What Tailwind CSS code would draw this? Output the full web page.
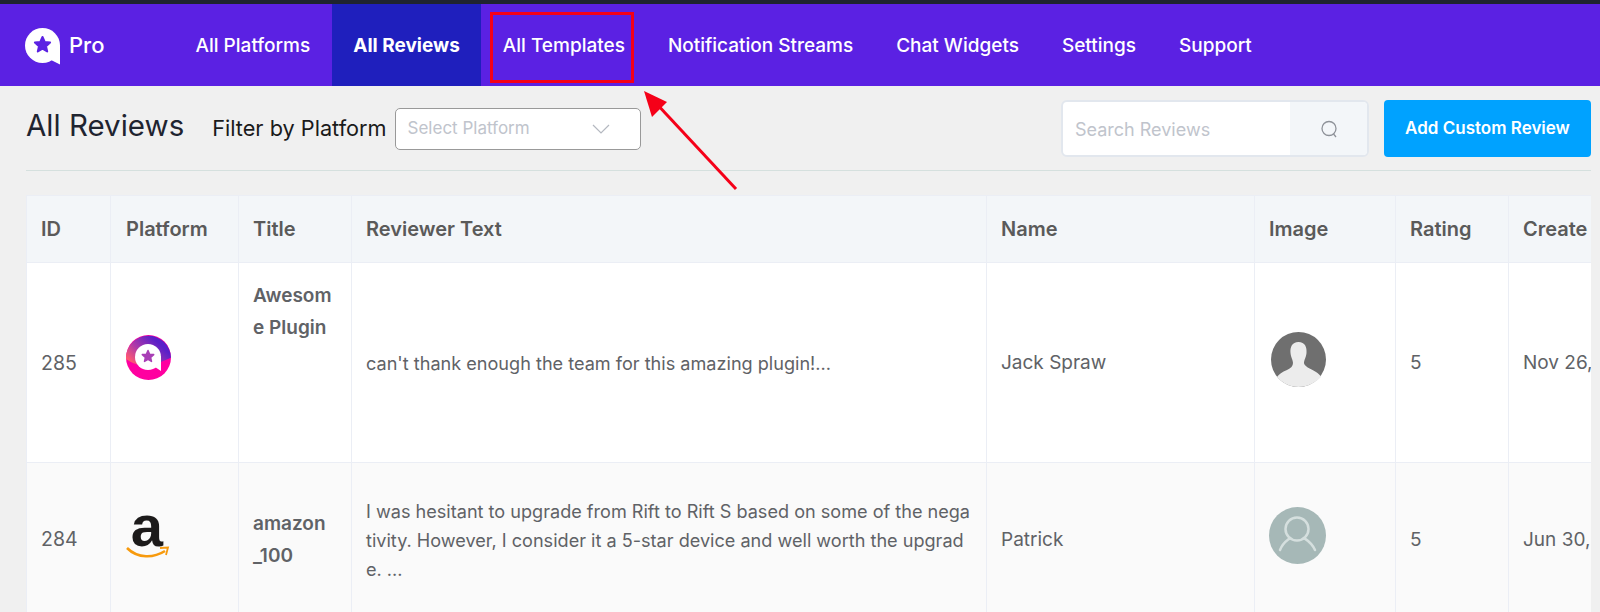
<!DOCTYPE html>
<html lang="en">

<head>
    <meta charset="UTF-8" />
    <title>All Reviews</title>
    <script src="https://cdn.jsdelivr.net/npm/@tailwindcss/browser@4"></script>
</head>

<body class="relative h-[612px] w-[1600px] overflow-hidden bg-[#f0f0f0] font-['Inter',sans-serif] text-[18px] text-[#606266]">
    <!-- Top strip -->
    <div class="h-1 bg-[#1f2430]"></div>

    <!-- Nav -->
    <nav class="flex h-[82px] items-stretch bg-[#5b21e3] text-[19px] font-medium text-white">
        <div class="flex w-[174px] items-center gap-2 pl-[25px]">
            <svg class="mt-[2px]" width="36" height="37" viewBox="0 0 36 37">
                <circle cx="17.5" cy="17.5" r="17.5" fill="#fff" />
                <path d="M35 17 V36.5 L26 32 Z" fill="#fff" />
                <polygon transform="translate(17.5 17)" fill="#5b21e3" stroke="#5b21e3" stroke-width="2" stroke-linejoin="round"
                    points="0,-8 2.2,-3 7.6,-2.5 3.5,1.2 4.7,6.5 0,3.7 -4.7,6.5 -3.5,1.2 -7.6,-2.5 -2.2,-3" />
            </svg>
            <span class="pt-[1px] text-[22px]">Pro</span>
        </div>
        <a class="flex items-center px-[21.5px] pt-[3px]">All Platforms</a>
        <a class="flex items-center bg-[#1f1fbd] px-[21.5px] pt-[3px] font-bold">All Reviews</a>
        <a class="relative flex items-center px-[21.5px] pt-[3px]">
            All Templates
            <span class="absolute top-[8px] bottom-[3px] left-[9px] right-[12px] border-[3px] border-[#f50018]"></span>
        </a>
        <a class="flex items-center px-[21.5px] pt-[3px]">Notification Streams</a>
        <a class="flex items-center px-[21.5px] pt-[3px]">Chat Widgets</a>
        <a class="flex items-center px-[21.5px] pt-[3px]">Settings</a>
        <a class="flex items-center px-[21.5px] pt-[3px]">Support</a>
    </nav>

    <main class="pl-[26px] pr-[9px]">
        <!-- Toolbar -->
        <div class="flex h-[85px] items-center justify-between border-b border-[#d5e0de] pt-[1px]">
            <div class="flex items-center">
                <h1 class="mb-[5px] mr-[28px] text-[29.5px] leading-none text-[#1f2430]">All Reviews</h1>
                <span class="mb-[1px] mr-[8px] text-[21.7px] text-[#1a1a1a]">Filter by Platform</span>
                <div class="flex h-[42px] w-[246px] items-center justify-between rounded-[5px] border border-[#999] bg-white pl-3 pr-[30px] pt-[1px] text-[17px] text-[#c0c4cc]">
                    Select Platform
                    <svg width="18" height="10" viewBox="0 0 18 10" fill="none" stroke="#b4b8c0" stroke-width="1.2">
                        <path d="M1 1 L9 9 L17 1" />
                    </svg>
                </div>
            </div>
            <div class="flex items-center gap-[15px]">
                <div class="flex h-[57px] w-[308px] overflow-hidden rounded-md border-2 border-[#e2e7ee] bg-white">
                    <span class="flex flex-1 items-center pl-[12px] pt-[1px] text-[#c0c4cc]">Search Reviews</span>
                    <span class="flex w-[77px] items-center justify-center bg-[#f3f6f9]">
                        <svg width="20" height="20" viewBox="0 0 20 20" fill="none" stroke="#8e9299" stroke-width="1.3">
                            <circle cx="10" cy="9.5" r="7" />
                            <path d="M14.5 15 L17 18" />
                        </svg>
                    </span>
                </div>
                <button class="h-[57px] w-[207px] rounded-[4px] bg-[#00a2ff] text-[17px] font-semibold text-white">Add Custom Review</button>
            </div>
        </div>

        <!-- Table -->
        <div class="mt-[24px] overflow-hidden">
            <table class="w-[1740px] table-fixed border-collapse">
                <colgroup>
                    <col class="w-[84px]" />
                    <col class="w-[128px]" />
                    <col class="w-[113px]" />
                    <col class="w-[635px]" />
                    <col class="w-[268px]" />
                    <col class="w-[141px]" />
                    <col class="w-[113px]" />
                    <col class="w-[258px]" />
                </colgroup>
                <thead class="bg-[#f3f6f9] text-left text-[20px] text-[#5a5a5a]">
                    <tr class="h-[67px]">
                        <th class="border border-[#ebeef5] pl-[14px] font-semibold">ID</th>
                        <th class="border border-[#ebeef5] pl-[15px] font-semibold">Platform</th>
                        <th class="border border-[#ebeef5] pl-[14px] font-semibold">Title</th>
                        <th class="border border-[#ebeef5] pl-[14px] font-semibold">Reviewer Text</th>
                        <th class="border border-[#ebeef5] pl-[14px] font-semibold">Name</th>
                        <th class="border border-[#ebeef5] pl-[14px] font-semibold">Image</th>
                        <th class="border border-[#ebeef5] pl-[14px] font-semibold">Rating</th>
                        <th class="border border-[#ebeef5] pl-[14px] font-semibold"><span class="block w-[65px] overflow-hidden whitespace-nowrap">Created At</span></th>
                    </tr>
                </thead>
                <tbody>
                    <tr class="h-[200px] bg-white">
                        <td class="border border-[#ebeef5] pl-[14px] pt-[2px] text-[19.5px]">285</td>
                        <td class="border border-[#ebeef5] pl-[15px]">
                            <svg class="mb-[10px]" width="45" height="45" viewBox="0 0 45 45">
                                <defs>
                                    <linearGradient id="wp-grad" x1="1" y1="0" x2="0" y2="0.7">
                                        <stop offset="0.3" stop-color="#5a1fc8" />
                                        <stop offset="0.7" stop-color="#b03aa8" />
                                        <stop offset="1" stop-color="#ff5a70" />
                                    </linearGradient>
                                </defs>
                                <circle cx="22.5" cy="22.5" r="22.5" fill="#ff00a0" />
                                <path d="M0 24 A22.5 22.5 0 0 1 45 22.5 C40 25 36 26 30 30 C22 33 8 30 0 24 Z" fill="url(#wp-grad)" />
                                <circle cx="22" cy="22" r="13" fill="#fff" />
                                <path d="M35 21 V36 L29 32 L22 30 Z" fill="#fff" />
                                <polygon transform="translate(22 21.5)" fill="#a83fb5" stroke="#a83fb5" stroke-width="1.5" stroke-linejoin="round"
                                    points="0,-6 1.7,-2.3 5.7,-1.9 2.6,0.9 3.5,4.9 0,2.8 -3.5,4.9 -2.6,0.9 -5.7,-1.9 -1.7,-2.3" />
                            </svg>
                        </td>
                        <td class="break-all border border-[#ebeef5] pl-[14px] pr-[15px] pt-[17px] align-top text-[19px] font-semibold leading-[32px]">Awesome Plugin</td>
                        <td class="border border-[#ebeef5] pl-[14px] pr-[13px] pt-[2px] text-[18.1px]">can't thank enough the team for this amazing plugin!...</td>
                        <td class="border border-[#ebeef5] pl-[14px] pt-[2px] text-[19px]">Jack Spraw</td>
                        <td class="border border-[#ebeef5] pl-[16px]">
                            <svg class="mb-[6px]" width="55" height="55" viewBox="0 0 55 55">
                                <circle cx="27.5" cy="27.5" r="27.5" fill="#6f6f6f" />
                                <path d="M27.5 10 C34 10 36 15 35.5 21 C35 26 33 28 33 31 C33 34 38 36 45 40 C47 41 49 43 50 45 C44 51 36 55 27.5 55 C19 55 11 51 6 45 C8 42 11 40 16 38 C20 36 22 34 22 31 C22 28 20 26 19.5 21 C19 15 21 10 27.5 10 Z" fill="#ececec" />
                            </svg>
                        </td>
                        <td class="border border-[#ebeef5] pl-[14px] pt-[2px] text-[19px]">5</td>
                        <td class="border border-[#ebeef5] pl-[14px] pt-[2px] text-[19px]">Nov 26, 2020</td>
                    </tr>
                    <tr class="h-[155px] bg-[#fafafa]">
                        <td class="border border-[#ebeef5] pl-[14px] text-[19.5px]">284</td>
                        <td class="border border-[#ebeef5] pl-[15px]">
                            <svg class="mb-[5px] overflow-visible" width="44" height="46" viewBox="0 0 44 46">
                                <text x="21" y="31" text-anchor="middle" font-family="'Liberation Sans',sans-serif" font-weight="700" font-size="58" fill="#1c1a1a">a</text>
                                <path d="M1 33 C12 44 28 43 39 36" fill="none" stroke="#f79a0d" stroke-width="2.6" />
                                <path d="M34 33 L42 32.5 L40 40" fill="none" stroke="#f79a0d" stroke-width="1.8" />
                            </svg>
                        </td>
                        <td class="break-all border border-[#ebeef5] pl-[14px] pr-[20px] text-[19px] font-semibold leading-[32px]">amazon_100</td>
                        <td class="break-all border border-[#ebeef5] pl-[14px] pr-[13px] text-[18.1px] leading-[29px]">I was hesitant to upgrade from Rift to Rift S based on some of the negativity. However, I consider it a 5-star device and well worth the upgrade. ...</td>
                        <td class="border border-[#ebeef5] pl-[14px] text-[19px]">Patrick</td>
                        <td class="border border-[#ebeef5] pl-[14px]">
                            <svg class="mb-[10px]" width="57" height="57" viewBox="0 0 57 57" fill="none" stroke="#d5dfde" stroke-width="2.5">
                                <circle cx="28.5" cy="28.5" r="28.5" fill="#a6b8b7" stroke="none" />
                                <circle cx="28" cy="22" r="11.5" />
                                <path d="M11 43 C14 35 19 33 21 31 M35 31 C38 33 43 36 46 43" stroke-linecap="round" />
                            </svg>
                        </td>
                        <td class="border border-[#ebeef5] pl-[14px] text-[19px]">5</td>
                        <td class="border border-[#ebeef5] pl-[14px] text-[19px]">Jun 30, 2020</td>
                    </tr>
                </tbody>
            </table>
        </div>
    </main>

    <!-- Annotation arrow -->
    <svg class="pointer-events-none absolute top-0 left-0" width="1600" height="612" viewBox="0 0 1600 612">
        <path d="M736 189 L654 101" stroke="#f50018" stroke-width="3" fill="none" />
        <polygon points="644,91 667,102 652,117" fill="#f50018" />
    </svg>
</body>

</html>
